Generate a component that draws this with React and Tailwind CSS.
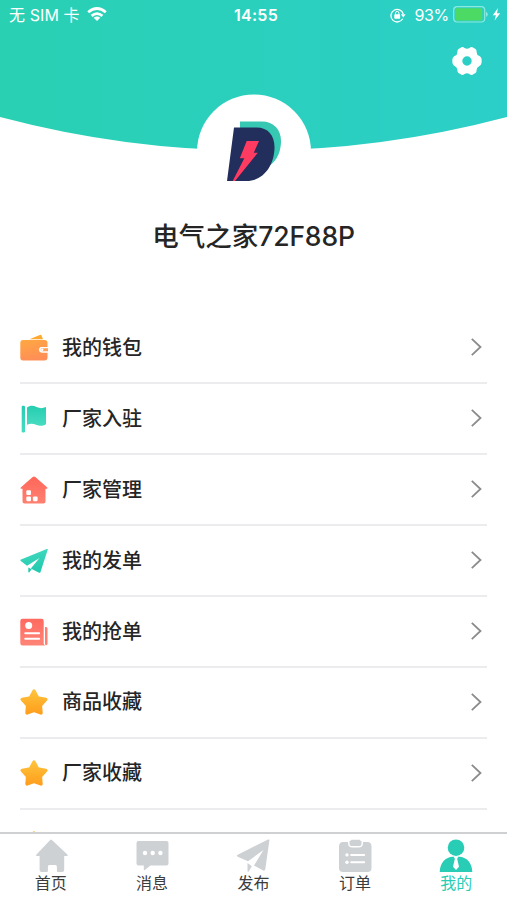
import React from 'react';

const CJK = "font-['Inter','Noto_Sans_CJK_SC',sans-serif]";

function Wallet() {
  return (
    <svg width="28" height="28" viewBox="0 0 28 28">
      <defs>
        <linearGradient id="wallet" x1="0" y1="0" x2="0.3" y2="1">
          <stop offset="0" stopColor="#ffa842" />
          <stop offset="1" stopColor="#ff8f56" />
        </linearGradient>
      </defs>
      <path d="M9.5 5.2 19.8.9q1.200-.5 1.700.6L23 5.200z" fill="#ffa92e" />
      <path d="M3 6h21.500q3 0 3 3v4h-5.500a3 3 0 0 0-3 2.700h-.5v.3h.5a3 3 0 0 0 3 2.500h5.500v5q0 3-3 3H3q-2.700 0-2.700-3V9q0-3 2.700-3z" fill="url(#wallet)" />
      <path d="M22 13h6v5.500h-6a2.750 2.750 0 0 1 0-5.500z" fill="#fff" />
      <path d="M22.200 14.300H28v2.900h-5.800a1.450 1.450 0 0 1 0-2.900z" fill="#ffa15a" />
      <circle cx="22.200" cy="15.700" r="1.200" fill="#fff" />
    </svg>
  );
}

function Flag() {
  return (
    <svg width="28" height="28" viewBox="0 0 28 28">
      <defs>
        <linearGradient id="flag" x1="0" y1="0" x2="0" y2="1">
          <stop offset="0" stopColor="#25cdb0" />
          <stop offset="1" stopColor="#48dcc2" />
        </linearGradient>
      </defs>
      <rect x="1.700" y=".8" width="3.300" height="26.700" rx="1.200" fill="url(#flag)" />
      <path d="M7 2.500C10 .2 13.500.5 16.500 2c3.500 1.600 6 1.500 9.500 0v17.200c-3.500 2-6.500 2.100-10 .5-3-1.300-6-1.300-9 .1z" fill="url(#flag)" />
    </svg>
  );
}

function Factory() {
  return (
    <svg width="28" height="28" viewBox="0 0 28 28">
      <defs>
        <linearGradient id="factory" x1="0" y1="0" x2="0" y2="1">
          <stop offset="0" stopColor="#ff6659" />
          <stop offset="1" stopColor="#ff8171" />
        </linearGradient>
      </defs>
      <path d="M12.700 1q1.300-1.200 2.600 0L27 11.300q1.200 1.400-.7 1.400h-.8V25.500q0 2-2 2H4.500q-2 0-2-2V12.700h-.8q-1.900 0-.7-1.400z" fill="url(#factory)" />
      <g fill="#fff">
        <rect x="6.300" y="14.300" width="4.700" height="4.700" rx="1.100" />
        <rect x="6.300" y="20.500" width="4.700" height="4.700" rx="1.100" />
        <rect x="12.900" y="20.500" width="4.700" height="4.700" rx="1.100" />
      </g>
    </svg>
  );
}

function Plane() {
  return (
    <svg width="28" height="28" viewBox="0 0 28 28">
      <defs>
        <linearGradient id="plane" x1="0" y1="0" x2="0.2" y2="1">
          <stop offset="0" stopColor="#45dac0" />
          <stop offset="1" stopColor="#22caae" />
        </linearGradient>
      </defs>
      <path d="M27.700 2.800 20.500 25q-.4 1.200-1.500.7l-8.200-4.200L19.500 11 7 18.800.8 14q-1-.8.2-1.400L26.800 1.900q1.200-.3.900.9z" fill="url(#plane)" />
      <path d="M8.300 20.500v4.300q.2 1.300 1.100.4l2.200-2.900z" fill="#22caae" />
    </svg>
  );
}

function News() {
  return (
    <svg width="28" height="28" viewBox="0 0 28 28">
      <defs>
        <linearGradient id="news" x1="0" y1="0" x2="0" y2="1">
          <stop offset="0" stopColor="#ff6a60" />
          <stop offset="1" stopColor="#ff8577" />
        </linearGradient>
      </defs>
      <path d="M2.500.7h19q2.200 0 2.200 2.200v22.300q0 1.500 1.500 2.300H2.500q-2.200 0-2.200-2.200V2.900Q.3.7 2.500.7z" fill="url(#news)" />
      <path d="M25 9h1q1.500 0 1.500 1.500v15q0 1.700-1.300 1.700T25 25.500z" fill="#ff8073" />
      <circle cx="8.700" cy="7.600" r="3.500" fill="#fff" />
      <path d="M5.200 15.300h14M5.200 20.800h14" stroke="#fff" strokeWidth="1.900" strokeLinecap="round" />
    </svg>
  );
}

function Star() {
  return (
    <svg width="28" height="28" viewBox="0 0 28 28">
      <defs>
        <linearGradient id="star" x1="0" y1="0" x2="0" y2="1">
          <stop offset="0" stopColor="#ffc23a" />
          <stop offset="1" stopColor="#ff9f1e" />
        </linearGradient>
      </defs>
      <path d="M14 3l3.600 6.800 8.200 1.600-5.400 5.900.6 7.700L14 22.300 7 25l.6-7.700-5.400-5.900 8.200-1.600z" fill="url(#star)" stroke="url(#star)" strokeWidth="3.400" strokeLinejoin="round" />
    </svg>
  );
}

const rows = [
  { label: '我的钱包', Icon: Wallet },
  { label: '厂家入驻', Icon: Flag },
  { label: '厂家管理', Icon: Factory },
  { label: '我的发单', Icon: Plane },
  { label: '我的抢单', Icon: News },
  { label: '商品收藏', Icon: Star },
  { label: '厂家收藏', Icon: Star },
  { label: '', Icon: Star },
];

function Row({ label, Icon }) {
  return (
    <div className="flex h-[70.9px] shrink-0 items-center border-b-2 border-[#ececee]">
      <Icon />
      <span className="ml-3.5 grow text-[20px] leading-7 font-medium text-[#252525]">{label}</span>
      <svg width="12" height="20" viewBox="0 0 12 20" className="mr-[5px] mb-px" fill="none" stroke="#8b8b8d" strokeWidth="1.800">
        <path d="M1.800 1.800 10.500 10l-8.700 8.200" />
      </svg>
    </div>
  );
}

const tabs = [
  {
    label: '首页',
    icon: (
      <path d="M17.900.9 33.100 15.300q1.500 1.700-.8 1.700h-2.100v14q0 2-2 2h-4.300q-1 0-1-1v-4.500q0-1.500-1.500-1.500h-6q-1.500 0-1.500 1.500V32q0 1-1 1H7.600q-2 0-2-2V17H3.500q-2.300 0-.8-1.700L16.200.9q.9-.8 1.700 0z" />
    ),
  },
  {
    label: '消息',
    icon: (
      <>
        <path d="M3.500 2h28q2 0 2 2v20.500q0 2-2 2H15.500L9.800 31q-1 .6-1-.5v-4H3.500q-2 0-2-2V4q0-2 2-2z" />
        <g fill="#fff">
          <circle cx="10" cy="14" r="2.200" />
          <circle cx="17.700" cy="14" r="2.200" />
          <circle cx="25.400" cy="14" r="2.200" />
        </g>
      </>
    ),
  },
  {
    label: '发布',
    icon: (
      <>
        <path d="M33.400 1.200 29.300 30q-.5 2.400-2.500 1.300L18 26.600 27.500 11 12 22.200 1.700 17.800Q0 16.800 1.700 15.700L32 .6q1.600-.6 1.400.6z" />
        <path d="M11.500 24 15.800 27.200 12.900 32.200q-1.400 1.300-1.400-.7z" />
      </>
    ),
  },
  {
    label: '订单',
    icon: (
      <>
        <path d="M5 3h5v1q0 4.500 4.500 4.500h6q4.500 0 4.500-4.500V3h4.500q4 0 4 4.500V29q0 4-4 4H5q-4 0-4-4V7.500Q1 3 5 3z" />
        <path d="M13.700.8h7.600q1 0 1.200 1.200h1v3q0 2-2 2h-8q-2 0-2-2V2h1q.2-1.200 1.200-1.200z" />
        <g fill="#fff">
          <circle cx="9" cy="15.900" r="1.700" />
          <circle cx="9" cy="23.200" r="1.700" />
          <rect x="12.200" y="14.900" width="15" height="2.100" rx="1" />
          <rect x="12.200" y="22.200" width="15" height="2.100" rx="1" />
        </g>
      </>
    ),
  },
  {
    label: '我的',
    active: true,
    icon: (
      <>
        <circle cx="17" cy="8.700" r="8.300" />
        <path d="M.7 33C1 24 6 18.300 13 17.700h8c7 .6 12 6.300 12.300 15.300z" />
        <path d="M14.700 17.300h4.600L18.200 20l1.800 7.800-3 3.200-3-3.200 1.800-7.800z" fill="#fff" />
      </>
    ),
  },
];

function Header() {
  return (
    <header className="grid h-[212px] shrink-0">
      <svg width="507" height="212" viewBox="0 0 507 212" className="[grid-area:1/1]">
        <defs>
          <linearGradient id="header" x1="0" y1="0" x2="1" y2="0">
            <stop offset="0" stopColor="#29d0b2" />
            <stop offset="1" stopColor="#2ccfc8" />
          </linearGradient>
        </defs>
        <path d="M0 0H507V117Q253.500 184 0 117z" fill="url(#header)" />
        <circle cx="254" cy="151.500" r="57" fill="#fff" />
        <path d="M240 121.500h22c12 0 19.500 8.500 19 21-.5 12-6 21-16 26l-25-30z" fill="#37c8b4" />
        <path d="M234 127.500h22.500c12 0 18.500 8.500 18 21-.6 17-11 32.500-28 32.500H227z" fill="#222e5b" />
        <path d="M246.700 141H259l-5.200 11.700h4L235 181h-2.300l11.600-22.700H239.800z" fill="#ff3b62" />
      </svg>
      <div className="flex flex-col text-white [grid-area:1/1]">
        <div className="grid h-[30px] grid-cols-3 items-center pl-[9px] text-[16px]">
          <div className="flex items-center gap-2">
            <span className="whitespace-nowrap tracking-[0.100px]">无 SIM 卡</span>
            <svg width="20" height="15" viewBox="0 0 20 15" fill="none" stroke="#fff" strokeWidth="2.700" className="-ml-px mb-0.5">
              <path d="M1.200 5.300Q10-2.300 18.800 5.300M4.600 8.900Q10 4.300 15.400 8.900" />
              <path d="M6.700 10.700q3.300-2.400 6.600 0L10 14z" fill="#fff" stroke="none" />
            </svg>
          </div>
          <span className="-ml-2 pl-1 text-center text-[16px] font-semibold tracking-[0.300px]">14:55</span>
          <div className="flex items-center justify-end pr-1.5">
            <svg width="16" height="15" viewBox="0 0 16 15" fill="none" stroke="#fff" strokeWidth="1.300">
              <path d="M12.700 10.800A6.300 6.300 0 1 1 13.300 6" />
              <path d="M10.800 6.300h4.800l-2.300 3.200z" fill="#fff" stroke="none" />
              <rect x="4.300" y="6.300" width="5.800" height="4.400" rx=".6" fill="#fff" stroke="none" />
              <path d="M5.500 7V5.100a1.700 1.700 0 0 1 3.400 0V7" strokeWidth="1" />
            </svg>
            <span className="ml-2 text-[16px] tracking-[-0.300px]">93%</span>
            <svg width="36" height="17" viewBox="0 0 36 17" className="ml-1 mb-px">
              <rect x=".7" y=".7" width="31" height="15.300" rx="3.500" fill="none" stroke="#8beadd" strokeWidth="1.200" />
              <rect x="2.200" y="2.200" width="27" height="12.300" rx="1.800" fill="#4cd964" />
              <path d="M33 5.500q3.500 2.800 0 5.600z" fill="#8beadd" />
            </svg>
            <svg width="9" height="13" viewBox="0 0 9 13" className="ml-[3px] mb-0.5">
              <path d="M6 0 .8 7.200h3.100L2.600 12.600 8.200 5.200H5z" fill="#fff" />
            </svg>
          </div>
        </div>
        <svg width="30" height="30" viewBox="0 0 30 30" className="mt-4 mr-[25px] self-end">
          <path fillRule="evenodd" d="M9.500 1.200Q11 .5 12.500 1.900q2.500 1.500 5 0Q19 .5 20.500 1.200l3 1.900q1.300.9 1.100 2.800 0 3 2.800 4.200 2.300.9 2.300 4.900t-2.300 4.900q-2.800 1.200-2.800 4.200.2 1.900-1.100 2.800l-3 1.900q-1.500.7-3-.7-2.500-1.500-5 0-1.500 1.400-3 .7l-3-1.900q-1.300-.9-1.100-2.800 0-3-2.800-4.200Q.3 19 .3 15t2.300-4.900Q5.400 8.900 5.400 5.900q-.2-1.900 1.100-2.800zM15 10.300a4.700 4.700 0 1 0 0 9.400 4.700 4.700 0 0 0 0-9.400z" fill="#fff" />
        </svg>
      </div>
    </header>
  );
}

export default function App() {
  return (
    <div className={`flex h-[900px] w-[507px] flex-col overflow-hidden bg-white ${CJK}`}>
      <Header />
      <h1 className="flex h-[50px] shrink-0 items-center justify-center text-[26.500px] font-medium text-[#252525]">
        电气之家<span className="tracking-[-0.150px]">72F88P</span>
      </h1>
      <main className="flex min-h-0 grow flex-col overflow-hidden px-5 pt-[51.500px]">
        {rows.map((row, i) => (
          <Row key={i} {...row} />
        ))}
      </main>
      <nav className="grid h-[68px] shrink-0 grid-cols-5 border-t-2 border-[#cfd0d2] bg-white">
        {tabs.map((tab) => (
          <div key={tab.label} className={`flex flex-col items-center pt-[5px] ${tab.active ? 'text-[#29cdb5]' : 'text-[#3c3c3c]'}`}>
            <svg width="34" height="34" viewBox="0 0 34 34" fill={tab.active ? '#29cdb5' : '#cdd1d4'}>
              {tab.icon}
            </svg>
            <span className="text-[16px] leading-5">{tab.label}</span>
          </div>
        ))}
      </nav>
    </div>
  );
}
